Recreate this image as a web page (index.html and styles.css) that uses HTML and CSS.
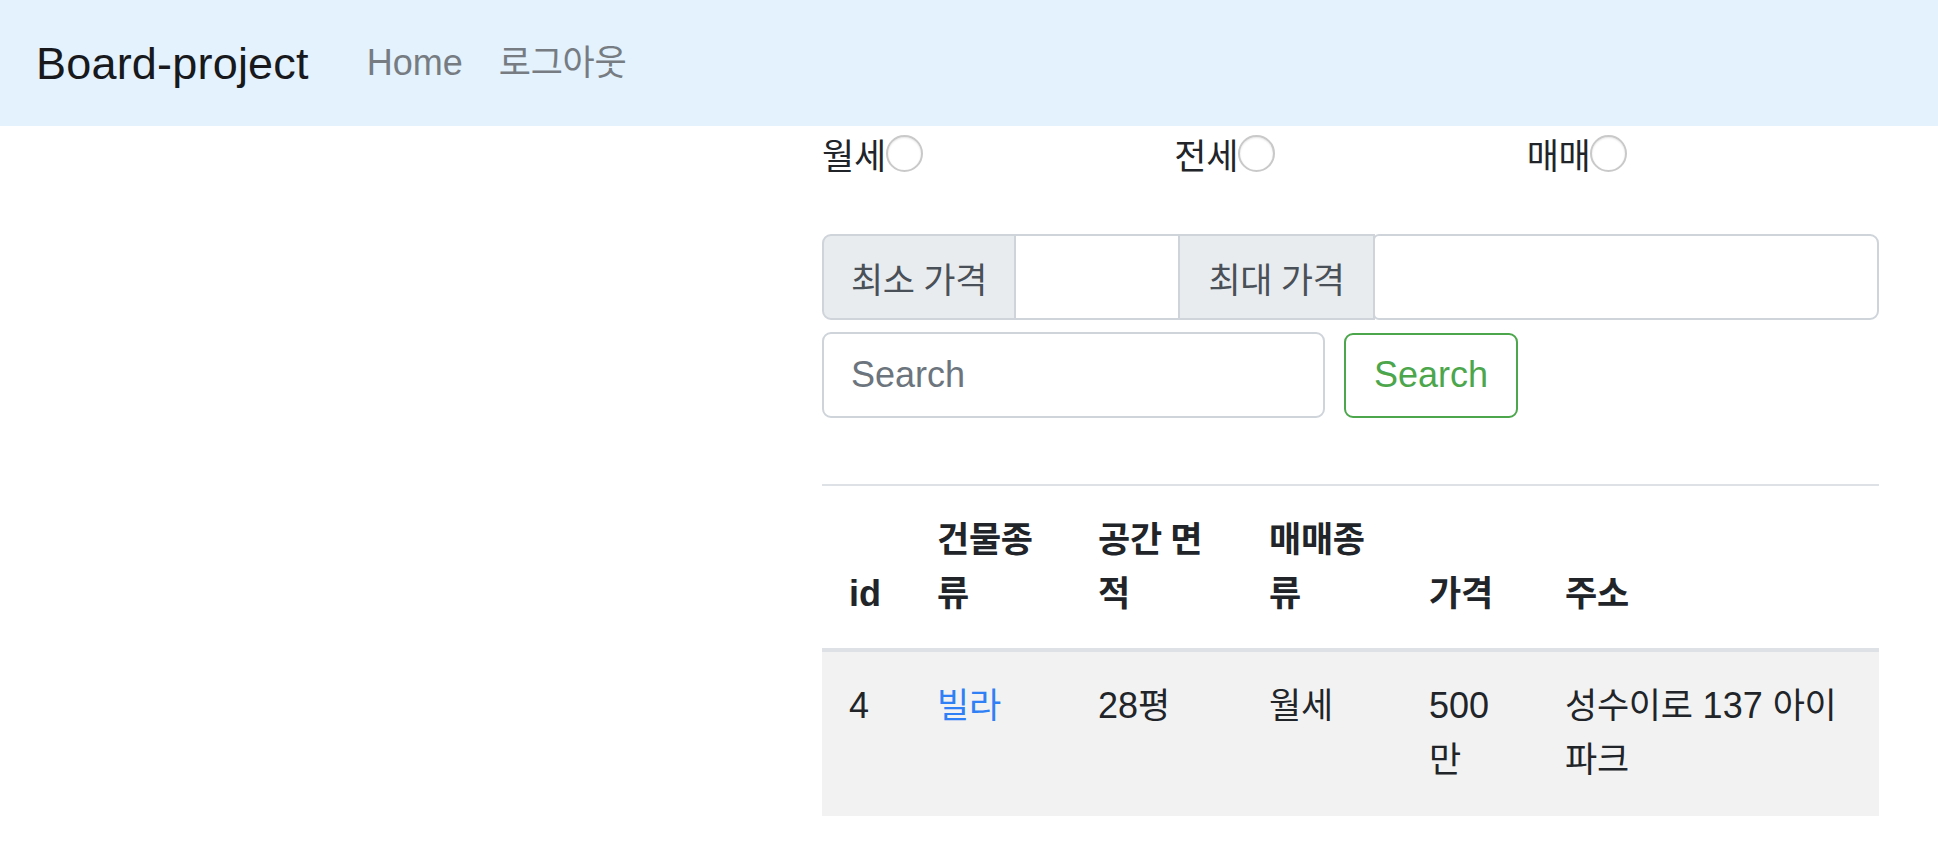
FILE: index.html
```html
<!DOCTYPE html>
<html lang="ko">
<head>
<meta charset="utf-8">
<title>Board-project</title>
<link rel="stylesheet" href="styles.css">
</head>
<body>
<nav class="navbar">
  <a class="brand" href="#">Board-project</a>
  <ul class="nav-links">
    <li><a class="nav-link" href="#">Home</a></li>
    <li><a class="nav-link" href="#"><span class="ko">로그아웃</span></a></li>
  </ul>
</nav>

<main class="content">
  <form class="filters">
    <div class="deal-types">
      <label class="deal"><span class="ko">월세</span><input class="radio" type="radio" name="deal"></label>
      <label class="deal"><span class="ko">전세</span><input class="radio" type="radio" name="deal"></label>
      <label class="deal"><span class="ko">매매</span><input class="radio" type="radio" name="deal"></label>
    </div>

    <div class="price-group">
      <span class="group-text group-text-first"><span class="ko">최소 가격</span></span>
      <input class="group-input group-input-min" type="text">
      <span class="group-text group-text-mid"><span class="ko">최대 가격</span></span>
      <input class="group-input group-input-max" type="text">
    </div>

    <div class="search-row">
      <input class="search-input" type="search" placeholder="Search">
      <button class="search-btn" type="button">Search</button>
    </div>
  </form>

  <table class="listing">
    <thead>
      <tr>
        <th class="col-id">id</th>
        <th class="col-type"><span class="ko">건물종류</span></th>
        <th class="col-area"><span class="ko">공간 면적</span></th>
        <th class="col-deal"><span class="ko">매매종류</span></th>
        <th class="col-price"><span class="ko">가격</span></th>
        <th class="col-addr"><span class="ko">주소</span></th>
      </tr>
    </thead>
    <tbody>
      <tr>
        <td>4</td>
        <td><a class="item-link" href="#"><span class="ko">빌라</span></a></td>
        <td>28<span class="ko">평</span></td>
        <td><span class="ko">월세</span></td>
        <td>500 <span class="ko">만</span></td>
        <td><span class="ko">성수이로</span> 137 <span class="ko">아이파크</span></td>
      </tr>
    </tbody>
  </table>
</main>
</body>
</html>
```

FILE: styles.css
```css
* {
  box-sizing: border-box;
}

html, body {
  margin: 0;
  padding: 0;
}

body {
  font-family: "Liberation Sans", "Noto Sans CJK KR", sans-serif;
  font-size: 36px;
  line-height: 54px;
  color: #212529;
  background: #ffffff;
}

.ko {
  font-family: "Noto Sans CJK KR", "Liberation Sans", sans-serif;
  font-size: 35px;
  line-height: 1;
  letter-spacing: -0.3px;
  word-spacing: -1px;
}

/* Navbar */
.navbar {
  display: flex;
  align-items: center;
  height: 126px;
  padding: 18px 36px;
  background: #e3f2fd;
}

.brand {
  font-size: 45px;
  line-height: 67px;
  color: #17191c;
  text-decoration: none;
  margin-right: 40px;
  letter-spacing: 0.2px;
}

.nav-links {
  display: flex;
  list-style: none;
  margin: 0;
  padding: 0;
}

.nav-link {
  display: block;
  padding: 0 18px;
  color: #767c82;
  text-decoration: none;
  line-height: 54px;
}

/* Content column */
.content {
  margin-left: 822px;
  width: 1057px;
}

.filters {
  margin: 0;
}

.deal-types {
  display: grid;
  grid-template-columns: repeat(3, 1fr);
  height: 54px;
}

.deal {
  display: flex;
  align-items: center;
  height: 54px;
}

.radio {
  appearance: none;
  -webkit-appearance: none;
  flex: none;
  width: 37px;
  height: 37px;
  margin: 0;
  border: 2px solid #c9c9c9;
  border-radius: 50%;
  background: #ffffff;
  box-shadow: inset 0 1px 2px rgba(0, 0, 0, 0.1);
}

/* Price input group */
.price-group {
  display: flex;
  width: 1057px;
  height: 86px;
  margin-top: 54px;
}

.group-text {
  display: flex;
  flex: none;
  align-items: center;
  justify-content: center;
  height: 86px;
  padding: 0 20px;
  background: #e9ecef;
  border: 2px solid #ced4da;
  color: #495057;
  white-space: nowrap;
}

.group-text-first {
  width: 194px;
  border-radius: 9px 0 0 9px;
}

.group-text-mid {
  width: 197px;
  margin-left: -2px;
}

.group-input {
  height: 86px;
  min-width: 0;
  border: 2px solid #ced4da;
  background: #ffffff;
  font: inherit;
  padding: 0 27px;
  outline: none;
}

.group-input-min {
  flex: none;
  width: 166px;
  margin-left: -2px;
  border-radius: 0;
}

.group-input-max {
  flex: 1 1 0;
  width: 0;
  margin-left: -2px;
  border-radius: 6px 9px 9px 6px;
}

/* Search row */
.search-row {
  display: flex;
  align-items: center;
  margin-top: 12px;
  height: 86px;
}

.search-input {
  width: 503px;
  height: 86px;
  border: 2px solid #ced4da;
  border-radius: 9px;
  padding: 0 27px;
  font-family: "Liberation Sans", sans-serif;
  font-size: 36px;
  color: #495057;
  margin-right: 19px;
  outline: none;
}

.search-input::placeholder {
  color: #6c757d;
}

.search-btn {
  width: 174px;
  height: 85px;
  border: 2px solid #4ca64c;
  border-radius: 9px;
  background: #ffffff;
  color: #4ca64c;
  font-family: "Liberation Sans", sans-serif;
  font-size: 36px;
  padding: 0 27px;
}

/* Table */
.listing {
  width: 1057px;
  margin-top: 66px;
  border-collapse: collapse;
  table-layout: fixed;
}

.listing th,
.listing td {
  padding: 27px;
  text-align: left;
  vertical-align: top;
  line-height: 54px;
}

.listing th {
  vertical-align: bottom;
  font-weight: 700;
  border-top: 2px solid #dee2e6;
  border-bottom: 4px solid #dee2e6;
}

.listing tbody tr {
  background: #f2f2f2;
}

.listing tbody td {
  padding-bottom: 29px;
}

.col-id { width: 88px; }
.col-type { width: 161px; }
.col-area { width: 171px; }
.col-deal { width: 160px; }
.col-price { width: 136px; }
.col-addr { width: 341px; }

.item-link {
  color: #2f80f6;
  text-decoration: none;
}
```
